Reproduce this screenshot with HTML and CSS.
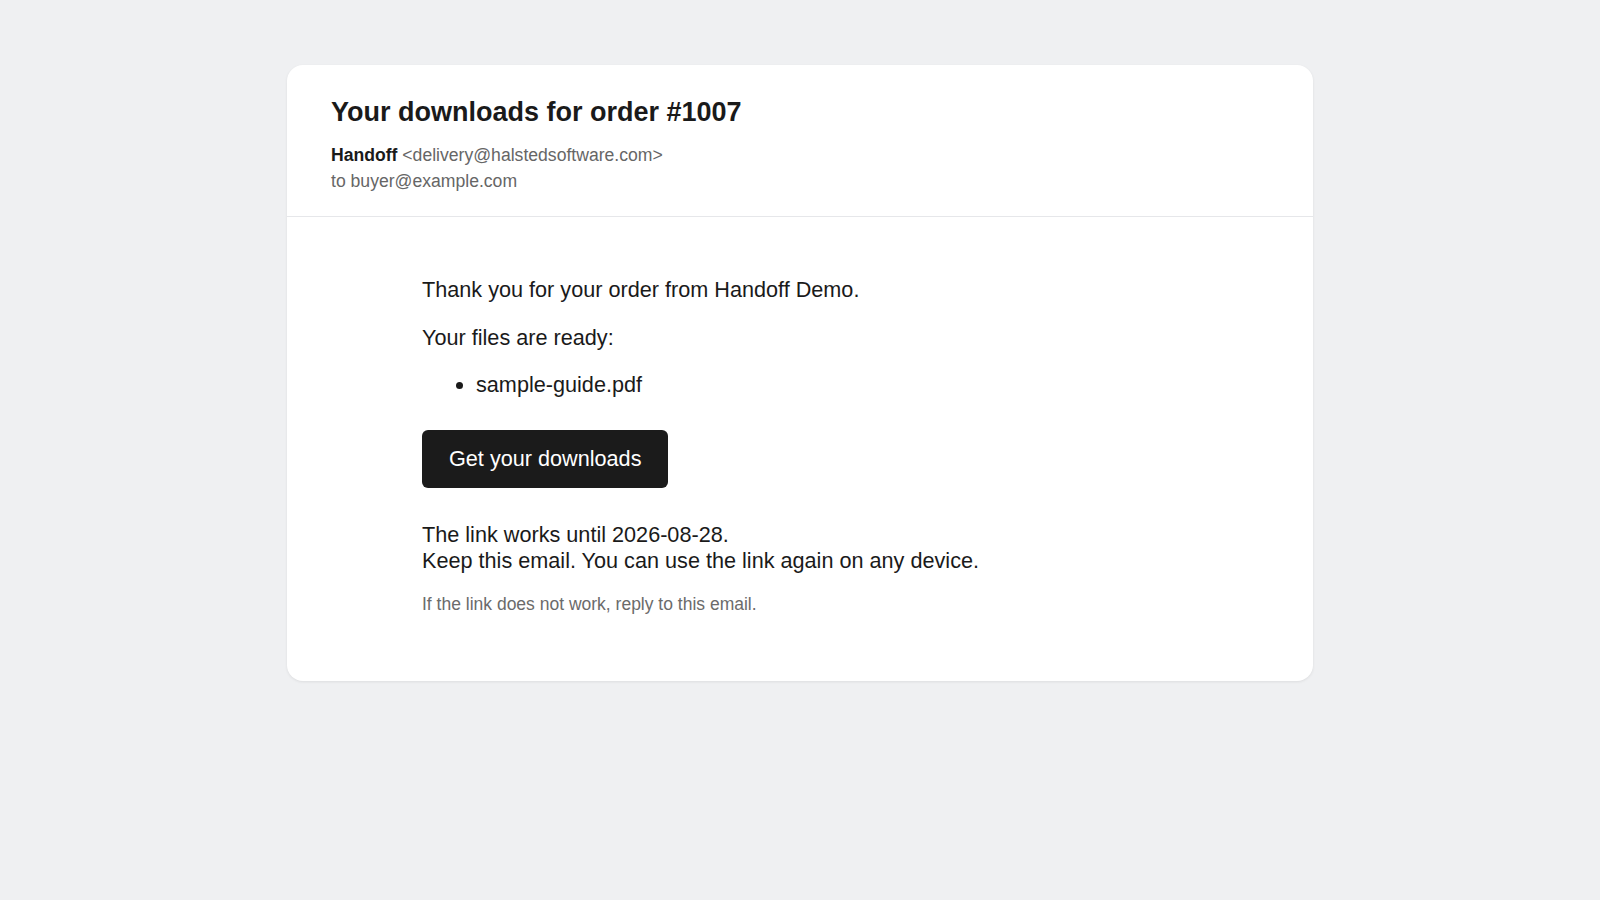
FILE: index.html
```html
<!DOCTYPE html>
<html lang="en">
<head>
    <meta charset="UTF-8">
    <meta name="viewport" content="width=device-width, initial-scale=1.0">
    <title>Your downloads for order #1007</title>
    <link rel="stylesheet" href="styles.css">
</head>
<body>
    <div class="mail">
        <div class="mail-head">
            <h1>Your downloads for order #1007</h1>
            <div class="meta">
                <div><strong>Handoff</strong> &lt;delivery@halstedsoftware.com&gt;</div>
                <div>to buyer@example.com</div>
            </div>
        </div>

        <div class="mail-body">
            <p>Thank you for your order from Handoff Demo.</p>
            <p>Your files are ready:</p>
            <ul class="files">
                <li>sample-guide.pdf</li>
            </ul>

            <div class="cta">
                <a class="btn" href="#">Get your downloads</a>
            </div>

            <p class="expiry">The link works until 2026-08-28.<br>
            Keep this email. You can use the link again on any device.</p>

            <p class="note">If the link does not work, reply to this email.</p>
        </div>
    </div>
</body>
</html>
```

FILE: styles.css
```css
* {
    box-sizing: border-box;
}

body {
    margin: 0;
    padding: 65px 0;
    background: #eff0f2;
    font-family: "Liberation Sans", Arial, sans-serif;
    color: #1a1a1a;
}

.mail {
    width: 1026px;
    margin: 0 auto;
    background: white;
    border-radius: 16px;
    box-shadow: 0 1px 3px rgba(0,0,0,0.08);
}

.mail-head {
    padding: 31px 44px 22px;
    border-bottom: 1px solid #e6e7ea;
}

h1 {
    margin: 0 0 15px;
    font-size: 27px;
    line-height: 32px;
    font-weight: bold;
}

.meta {
    font-size: 17.6px;
    line-height: 25.5px;
    color: #666;
}

.meta strong {
    color: #1a1a1a;
}

.mail-body {
    padding: 60px 135px 66px;
    font-size: 21.65px;
    line-height: 26px;
}

.mail-body p {
    margin: 0 0 21.5px;
}

.files {
    margin: 0;
    padding-left: 54px;
}

.cta {
    margin: 32px 0 33.5px;
}

.btn {
    display: inline-block;
    padding: 16px 27px;
    background: #1b1b1b;
    color: white;
    text-decoration: none;
    border-radius: 6px;
}

.mail-body .expiry {
    margin-bottom: 20.5px;
}

.mail-body .note {
    margin: 0;
    font-size: 17.5px;
    line-height: 21px;
    color: #6b6b6b;
}
```
